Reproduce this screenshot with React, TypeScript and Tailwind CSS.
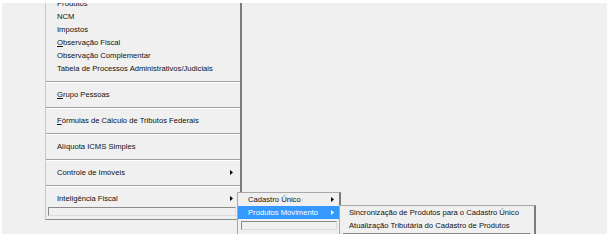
import React from "react";

type Item = { label: React.ReactNode; arrow?: boolean; sep?: boolean; active?: boolean };

const font = { fontFamily: '"Liberation Sans", Arial, sans-serif' };

function Arrow({ light }: { light?: boolean }) {
  return (
    <svg width="3" height="5" viewBox="0 0 3 5" className="shrink-0 mr-px">
      <polygon points="0,0 3,2.5 0,5" fill={light ? "#ffffff" : "#000000"} />
    </svg>
  );
}

function U({ c }: { c: string }) {
  return <span className="underline underline-offset-1">{c}</span>;
}

function Separator() {
  return (
    <div className="h-[13px] flex flex-col justify-center">
      <div className="h-px bg-[#a0a0a0]" />
      <div className="h-px bg-white" />
    </div>
  );
}

function Row({ item, pl, pr }: { item: Item; pl: string; pr: string }) {
  return (
    <div
      className={`h-[13px] flex items-center justify-between ${pl} ${pr} ${
        item.active ? "bg-[#3399ff] text-white" : "text-[#111]"
      }`}
    >
      <span className="whitespace-nowrap leading-none">{item.label}</span>
      {item.arrow && <Arrow light={item.active} />}
    </div>
  );
}

function EmptyBox({ className }: { className: string }) {
  return <div className={`h-[9px] border border-[#8a8a8a] border-r-[#dcdcdc] border-b-[#dcdcdc] ${className}`} />;
}

const mainItems: Item[] = [
  { label: "Produtos" },
  { label: "NCM" },
  { label: "Impostos" },
  { label: <><U c="O" />bservação Fiscal</> },
  { label: "Observação Complementar" },
  { label: "Tabela de Processos Administrativos/Judiciais" },
  { label: "", sep: true },
  { label: <><U c="G" />rupo Pessoas</> },
  { label: "", sep: true },
  { label: <><U c="F" />órmulas de Cálculo de Tributos Federais</> },
  { label: "", sep: true },
  { label: "Alíquota ICMS Simples" },
  { label: "", sep: true },
  { label: "Controle de Imóveis", arrow: true },
  { label: "", sep: true },
  { label: "Inteligência Fiscal", arrow: true },
];

const subItems: Item[] = [
  { label: "Cadastro Único", arrow: true },
  { label: "Produtos Movimento", arrow: true, active: true },
];

const sub2Items: Item[] = [
  { label: "Sincronização de Produtos para o Cadastro Único" },
  { label: "Atualização Tributária do Cadastro de Produtos" },
];

export default function App() {
  return (
    <div className="w-[611px] h-[240px] bg-white pt-[3px] pl-[2px] text-[7.65px]" style={font}>
      <div className="relative w-[605px] h-[231px] bg-[#f0f0f0] overflow-hidden">
        {/* main menu */}
        <div className="absolute left-[43px] top-[-6px] w-[197px] bg-[#f0f0f0] border-l border-l-[#c8c8c8] border-r-2 border-r-[#7c7c7c] border-b border-b-[#8a8a8a] pb-[3px]">
          {mainItems.map((item, i) =>
            item.sep ? <Separator key={i} /> : <Row key={i} item={item} pl="pl-[11px]" pr="pr-[6px]" />
          )}
          <EmptyBox className="mt-[2px] ml-[2px] mr-[4px]" />
        </div>

        {/* submenu 1 */}
        <div className="absolute left-[235px] top-[189px] w-[104px] h-[60px] bg-[#f0f0f0] border border-[#a8a8a8] border-r-2 border-r-[#7c7c7c]">
          {subItems.map((item, i) => (
            <Row key={i} item={item} pl="pl-[10px]" pr="pr-[4px]" />
          ))}
          <div className="pr-[2px]">
            <EmptyBox className="mt-[2px] ml-[3px]" />
          </div>
        </div>

        {/* submenu 2 */}
        <div className="absolute left-[337px] top-[202px] w-[197px] h-[60px] bg-[#f0f0f0] border border-[#a8a8a8] border-r-2 border-r-[#7c7c7c]">
          {sub2Items.map((item, i) => (
            <Row key={i} item={item} pl="pl-[9px]" pr="pr-[4px]" />
          ))}
          <EmptyBox className="mt-px ml-[3px] mr-[3px]" />
        </div>
      </div>
    </div>
  );
}
